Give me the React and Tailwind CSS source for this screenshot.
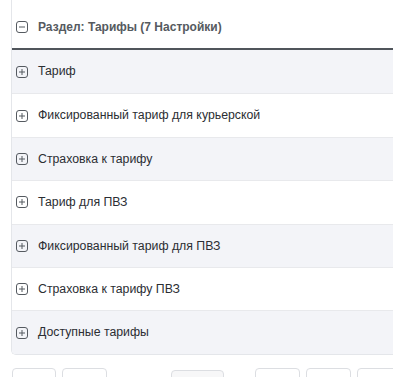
const rows = [
  'Тариф',
  'Фиксированный тариф для курьерской',
  'Страховка к тарифу',
  'Тариф для ПВЗ',
  'Фиксированный тариф для ПВЗ',
  'Страховка к тарифу ПВЗ',
  'Доступные тарифы',
]

function BoxIcon({ plus }) {
  return (
    <svg width="12" height="12" viewBox="0 0 12 12" className="shrink-0">
      <rect x="0.5" y="0.5" width="11" height="11" rx="2.5" fill="none" stroke="#555a60" strokeWidth="1" />
      <path d="M3 6h6" stroke="#555a60" strokeWidth="1" />
      {plus && <path d="M6 3v6" stroke="#555a60" strokeWidth="1" />}
    </svg>
  )
}

export default function App() {
  return (
    <div className="w-[393px] h-[377px] overflow-hidden bg-white pl-[11px] font-['Liberation_Sans',Arial,sans-serif]">
      <div className="w-[400px] border-l border-b border-[#e4e6ea] rounded-bl-[5px]">
        <div className="h-[50px] pt-[6px] flex items-center gap-[10px] pl-[4px] border-b-2 border-[#50555b]">
          <BoxIcon />
          <span className="text-[12px] font-bold text-[#555a60]">Раздел: Тарифы (7 Настройки)</span>
        </div>
        {rows.map((r, i) => (
          <div
            key={r}
            className={
              'h-[43.4px] flex items-center gap-[10px] pl-[4px] ' +
              (i > 0 ? 'border-t border-[#e8e9ec] ' : '') +
              (i % 2 === 0 ? 'bg-[#f3f4f8]' : 'bg-white') +
              (i === rows.length - 1 ? ' rounded-bl-[4px]' : '')
            }
          >
            <BoxIcon plus />
            <span className="text-[12.3px] text-[#2b2e33]">{r}</span>
          </div>
        ))}
      </div>
      <div className="flex items-start mt-[13px] h-[20px]">
        <div className="shrink-0 w-[44px] h-[20px] ml-[1px] border border-[#dcdee2] rounded-[4px] bg-white" />
        <div className="shrink-0 w-[45px] h-[20px] ml-[6px] border border-[#dcdee2] rounded-[4px] bg-white" />
        <div className="shrink-0 w-[53px] h-[20px] ml-[64px] mt-[2px] border border-[#dcdee2] rounded-[4px] bg-[#f7f7f8]" />
        <div className="shrink-0 w-[45px] h-[20px] ml-[31px] border border-[#dcdee2] rounded-[4px] bg-white" />
        <div className="shrink-0 w-[45px] h-[20px] ml-[6px] border border-[#dcdee2] rounded-[4px] bg-white" />
        <div className="shrink-0 w-[45px] h-[20px] ml-[6px] border border-[#dcdee2] rounded-[4px] bg-white" />
      </div>
    </div>
  )
}
